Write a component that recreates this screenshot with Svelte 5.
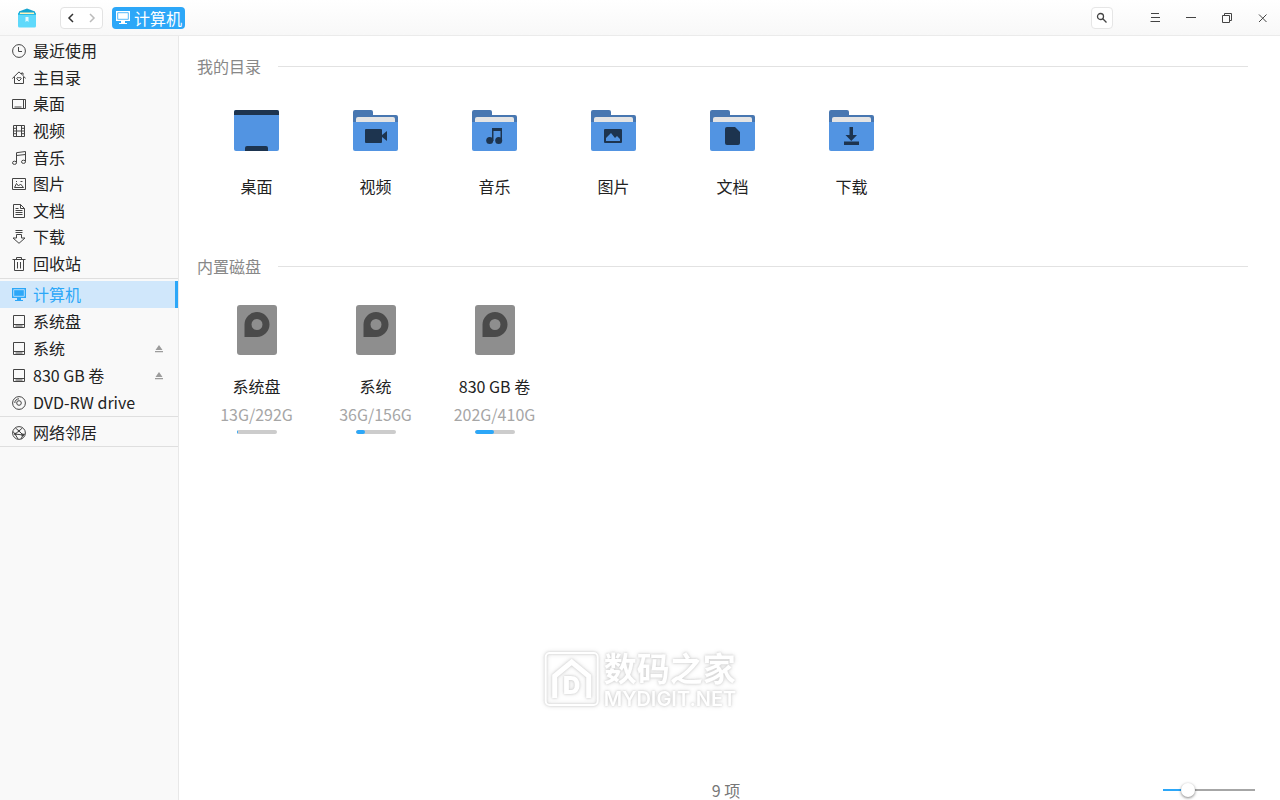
<script lang="ts">
  interface Place {
    icon: string
    label: string
    ejectable?: boolean
  }

  interface Disk {
    label: string
    used: number
    total: number
  }

  const bookmarks: Place[] = [
    { icon: 'recent', label: '最近使用' },
    { icon: 'home', label: '主目录' },
    { icon: 'desktop', label: '桌面' },
    { icon: 'video', label: '视频' },
    { icon: 'music', label: '音乐' },
    { icon: 'picture', label: '图片' },
    { icon: 'document', label: '文档' },
    { icon: 'download', label: '下载' },
    { icon: 'trash', label: '回收站' },
  ]

  const devices: Place[] = [
    { icon: 'computer', label: '计算机' },
    { icon: 'disk', label: '系统盘' },
    { icon: 'disk', label: '系统', ejectable: true },
    { icon: 'disk', label: '830 GB 卷', ejectable: true },
    { icon: 'dvd', label: 'DVD-RW drive' },
  ]

  const network: Place[] = [{ icon: 'network', label: '网络邻居' }]

  const folders = bookmarks.slice(2, 8)

  const disks: Disk[] = [
    { label: '系统盘', used: 13, total: 292 },
    { label: '系统', used: 36, total: 156 },
    { label: '830 GB 卷', used: 202, total: 410 },
  ]

  let current = $state('计算机')
  let zoom = $state(23)
  const itemCount = $derived(folders.length + disks.length)
</script>

{#snippet placeIcon(name: string)}
  <svg class="place-icon" viewBox="0 0 14 14" aria-hidden="true">
    {#if name === 'recent'}
      <circle cx="7" cy="7" r="6.4" />
      <path d="M6.5 3v4.5H10" />
    {:else if name === 'home'}
      <path d="M.3 7.5 7 .9l2.500 2.400V2H11v2.700l2.700 2.800M2.500 6v6.500h9V6" />
      <path d="M7 10 4.9 7.900C4.400 6.400 6.200 5.900 7 7.100c.8-1.200 2.600-.7 2.100.8z" />
    {:else if name === 'desktop'}
      <path d="M.5 2.5h13v9H.5zM11.5 2.5v9M2.5 10h7" />
    {:else if name === 'video'}
      <path d="M1.5 1.5h11v11h-11zM4.5 1.5v11M9.5 1.5v11M4.5 7h5M1.5 4.3h3M1.5 7h3M1.5 9.7h3M9.5 4.3h3M9.5 7h3M9.5 9.7h3" />
    {:else if name === 'music'}
      <path d="M4.5 11.5V1.7l9-1.200v10M4.500 4.500l9-1" />
      <ellipse cx="2.5" cy="11.8" rx="2" ry="1.6" />
      <ellipse cx="11.5" cy="10.8" rx="2" ry="1.6" />
    {:else if name === 'picture'}
      <path d="M.5 1.5h13v11H.5zM2.5 10.5l2-4 2 2.5 2-2 3 3.5zM4 4.5h1M8.5 4.5h2" />
    {:else if name === 'document'}
      <path d="M1.5.5h7l4 4v9h-11zM8.5.5v4h4M3.5 4.5h3M3.5 6.5h7M3.5 8.5h7M3.5 10.5h7" />
    {:else if name === 'download'}
      <path d="M3.5.5h7M3.5 2.5h7M4.5 4.5h5V8H13l-6 5.3L1 8h3.5z" />
    {:else if name === 'trash'}
      <path d="M.5 2.5h13M4.5 2.5v-2h5v2M2.5 2.5v11h9v-11M5.5 5v6.5M8.5 5v6.5" />
    {:else if name === 'computer'}
      <path class="solid" d="M0 0h14v10H9v2h2v1H3v-1h2v-2H0z" />
      <path class="screen" d="M1.7 1.7h10.6v6.6H1.7z" />
    {:else if name === 'disk'}
      <path d="M1.5.5h11v12h-11zM1.5 9.5h11M3.5 11h7" />
    {:else if name === 'dvd'}
      <circle cx="7" cy="7" r="6.4" />
      <circle cx="7" cy="7" r="2.3" />
      <path d="M2.8 7A4.2 4.2 0 0 1 7 2.8" />
    {:else if name === 'network'}
      <circle cx="7" cy="7" r="6.4" />
      <path d="M3.5 2 7 5l3.3-3M7 5 3 8l3 5M3 8 1 5.500M7 5l4 4 2-1M11 9l-2 4M3 8l8 1" />
      <circle class="solid" cx="7" cy="5" r="1.2" />
      <circle class="solid" cx="3.3" cy="8" r="1.2" />
      <circle class="solid" cx="10.7" cy="9" r="1.4" />
    {/if}
  </svg>
{/snippet}

{#snippet folderIcon(name: string)}
  <svg class="folder-icon" viewBox="0 0 45 41" aria-hidden="true">
    {#if name === 'desktop'}
      <rect width="45" height="41" rx="2" fill="#5294e2" />
      <path d="M0 5V2a2 2 0 0 1 2-2h41a2 2 0 0 1 2 2v3zM11 41v-3a2 2 0 0 1 2-2h19a2 2 0 0 1 2 2v3z" fill="#1d344f" />
    {:else}
      <path d="M0 16V2a2 2 0 0 1 2-2h16a2 2 0 0 1 2 2v3h23a2 2 0 0 1 2 2v9z" fill="#4877b1" />
      <path d="M3 16V9a2 2 0 0 1 2-2h35a2 2 0 0 1 2 2v7z" fill="#e4e4e4" />
      <path d="M0 12h45v27a2 2 0 0 1-2 2H2a2 2 0 0 1-2-2z" fill="#5294e2" />
      <g fill="#1d344f">
        {#if name === 'video'}
          <path d="M13 19h15a1 1 0 0 1 1 1v5l5-4v10l-5-4v5a1 1 0 0 1-1 1H13a1 1 0 0 1-1-1V20a1 1 0 0 1 1-1z" />
        {:else if name === 'music'}
          <path d="M20 18h10v3H20z" />
          <path d="M20 18h1.5v13H20zM28.5 18H30v13h-1.5z" />
          <circle cx="17.7" cy="30.5" r="3.5" />
          <circle cx="26.7" cy="30.5" r="3.5" />
        {:else if name === 'picture'}
          <path fill-rule="evenodd" d="M14 19h16a1 1 0 0 1 1 1v12a1 1 0 0 1-1 1H14a1 1 0 0 1-1-1V20a1 1 0 0 1 1-1zm1 12h14v-2l-3-3-2 2-4-5-5 5z" />
        {:else if name === 'document'}
          <path d="M17 17h8l5 5v11a2 2 0 0 1-2 2H17a2 2 0 0 1-2-2V19a2 2 0 0 1 2-2z" />
        {:else if name === 'download'}
          <path d="M20.5 17H24v8h4l-5.7 6-5.8-6h4zM15 31.5h15V35H15z" />
        {/if}
      </g>
    {/if}
  </svg>
{/snippet}

{#snippet placeList(places: Place[])}
  {#each places as place}
    <li class:active={place.label === current}>
      <a href="#top" onclick={() => (current = place.label)}>
        {@render placeIcon(place.icon)}
        <span class="place-label">{place.label}</span>
      </a>
      {#if place.ejectable}
        <button class="eject" aria-label="弹出 {place.label}">
          <svg viewBox="0 0 8 8" aria-hidden="true">
            <path d="M4 0 7.5 5h-7zM0 6h8v1.3H0z" fill="#9c9c9c" />
          </svg>
        </button>
      {/if}
    </li>
  {/each}
{/snippet}

<div class="window">
  <header class="titlebar">
    <svg class="app-icon" viewBox="0 0 18 20" aria-hidden="true">
      <path d="M1 3.5 9 .5l8 3v4H1z" fill="#14a5d0" />
      <path d="M0 4.5 2 6h14l2-1.5V18a1.5 1.5 0 0 1-1.5 1.5h-15A1.5 1.5 0 0 1 0 18z" fill="#5fd9fb" />
      <path d="M0 4.5 2 6h14l2-1.5V7H0z" fill="#2bbbe4" />
      <path d="M2 4.500h14V6H2z" fill="#fff3b8" />
      <path d="M7.500 9h3v5L9 12.800 7.500 14z" fill="#e2f9ff" />
    </svg>
    <div class="history">
      <button aria-label="后退">
        <svg viewBox="0 0 8 10" aria-hidden="true"><path d="M6 1 2 5l4 4" stroke="#333" /></svg>
      </button>
      <button aria-label="前进" disabled>
        <svg viewBox="0 0 8 10" aria-hidden="true"><path d="m2 1 4 4-4 4" stroke="#bbb" /></svg>
      </button>
    </div>
    <button class="crumb">
      {@render placeIcon('computer')}
      <span>计算机</span>
    </button>
    <button class="search" aria-label="搜索">
      <svg viewBox="0 0 12 12" aria-hidden="true">
        <circle cx="4.5" cy="4.5" r="3" />
        <path d="m6.8 6.8 3.7 3.7" />
      </svg>
    </button>
    <div class="controls">
      <button aria-label="菜单">
        <svg viewBox="0 0 12 12" aria-hidden="true"><path d="M2 1.5h8M2 5.5h9M1.5 9.5H11" /></svg>
      </button>
      <button aria-label="最小化">
        <svg viewBox="0 0 12 12" aria-hidden="true"><path d="M1 5.5h10" /></svg>
      </button>
      <button aria-label="还原">
        <svg viewBox="0 0 12 12" aria-hidden="true"><path d="M1.5 3.5h7v7h-7zM3.5 3.5v-2h7v7h-2" /></svg>
      </button>
      <button aria-label="关闭">
        <svg viewBox="0 0 12 12" aria-hidden="true"><path d="m2 2.5 7.500 7.500M9.500 2.500 2 10" /></svg>
      </button>
    </div>
  </header>

  <div class="body">
    <nav class="sidebar" aria-label="位置">
      <ul class="bookmarks">{@render placeList(bookmarks)}</ul>
      <ul>{@render placeList(devices)}</ul>
      <ul>{@render placeList(network)}</ul>
    </nav>

    <main class="content">
      <section>
        <h2>我的目录</h2>
        <div class="grid">
          {#each folders as folder}
            <button class="item">
              <span class="item-icon">{@render folderIcon(folder.icon)}</span>
              <span class="item-label">{folder.label}</span>
            </button>
          {/each}
        </div>
      </section>

      <section>
        <h2>内置磁盘</h2>
        <div class="grid">
          {#each disks as disk}
            <button class="item">
              <span class="item-icon">
                <svg class="disk-icon" viewBox="0 0 40 50" aria-hidden="true">
                  <rect width="40" height="50" rx="3" fill="#8e8e8e" />
                  <path fill-rule="evenodd" d="M7.5 32V19.5A12.5 12.5 0 1 1 20 32zM20 14a5.5 5.5 0 1 0 0 11 5.5 5.5 0 0 0 0-11z" fill="#4a4a4a" />
                </svg>
              </span>
              <span class="item-label">{disk.label}</span>
              <span class="capacity">{disk.used}G/{disk.total}G</span>
              <span class="usage">
                <span class="usage-fill" style={`width: ${(disk.used / disk.total) * 100}%`}></span>
              </span>
            </button>
          {/each}
        </div>
      </section>

      <footer class="statusbar">
        <span class="count">{itemCount} 项</span>
        <input
          type="range"
          min="0"
          max="100"
          bind:value={zoom}
          aria-label="图标大小"
          style={`--filled: ${zoom}%`}
        />
      </footer>
    </main>
  </div>

  <div class="watermark" aria-hidden="true">
    <svg viewBox="0 0 56 56">
      <rect x="2" y="2" width="52" height="52" rx="4" stroke-width="2" />
      <path d="M11 47V25l17-14 17 14v22" stroke-width="5" />
    </svg>
    <span class="watermark-letter">D</span>
    <div class="watermark-text">
      <span class="watermark-name">数码之家</span>
      <span class="watermark-site">MYDIGIT.NET</span>
    </div>
  </div>
</div>

<style>
  :global(body) {
    margin: 0;
  }

  .window {
    position: relative;
    display: flex;
    flex-direction: column;
    min-height: 100vh;
    background: #fff;
    color: #222;
    font-family: 'Noto Sans CJK SC', sans-serif;
    font-size: 16px;
    line-height: 24px;
  }

  button {
    margin: 0;
    padding: 0;
    border: 0;
    background: none;
    color: inherit;
    font: inherit;
  }

  svg {
    display: block;
    fill: none;
  }

  .titlebar {
    display: flex;
    align-items: center;
    box-sizing: border-box;
    height: 36px;
    padding: 0 11px 0 18px;
    border-bottom: 1px solid #ebebeb;
    background: linear-gradient(#fff, #f8f8f8);
  }

  .app-icon {
    width: 18px;
    height: 20px;
  }

  .history {
    display: flex;
    box-sizing: border-box;
    width: 43px;
    height: 22px;
    margin-left: 24px;
    border: 1px solid #e3e3e3;
    border-radius: 4px;
    background: #fff;
  }

  .history button {
    flex: 1;
    display: grid;
    place-items: center;
  }

  .history svg {
    width: 8px;
    height: 10px;
    stroke-width: 1.5;
  }

  .crumb {
    display: flex;
    align-items: center;
    gap: 4px;
    height: 22px;
    margin-left: 9px;
    padding: 0 3px 0 4px;
    border-radius: 4px;
    background: #2ca7f8;
    color: #fff;
    line-height: 22px;
  }

  .search {
    display: grid;
    place-items: center;
    box-sizing: border-box;
    width: 22px;
    height: 22px;
    margin-left: auto;
    border: 1px solid #e6e6e6;
    border-radius: 4px;
    background: #fff;
  }

  .search svg {
    width: 12px;
    height: 12px;
    stroke: #444;
    stroke-width: 1.3;
  }

  .controls {
    display: flex;
    gap: 24px;
    margin-left: 36px;
  }

  .controls svg {
    width: 12px;
    height: 12px;
    stroke: #444;
  }

  .body {
    flex: 1;
    display: flex;
  }

  .sidebar {
    flex: none;
    box-sizing: border-box;
    width: 179px;
    border-right: 1px solid #e8e8e8;
    background: #f9f9f9;
  }

  .sidebar ul {
    display: flex;
    flex-direction: column;
    justify-content: space-between;
    margin: 0;
    padding: 2px 0 0;
    border-bottom: 1px solid #dfdfdf;
    list-style: none;
  }

  .sidebar .bookmarks {
    min-height: 239px;
    padding-bottom: 1px;
  }

  .sidebar li {
    display: flex;
    align-items: center;
    height: 27px;
    padding-right: 12px;
    border-right: 3px solid transparent;
  }

  .sidebar .bookmarks li {
    height: 26px;
  }

  .sidebar a {
    flex: 1;
    display: flex;
    align-items: center;
    gap: 7px;
    padding-left: 12px;
    color: inherit;
    text-decoration: none;
    white-space: nowrap;
  }

  .place-label {
    padding-bottom: 2px;
  }

  .sidebar .active {
    border-right-color: #2ca7f8;
    background: #d0e7fb;
    color: #2ca7f8;
  }

  .place-icon {
    width: 14px;
    height: 14px;
    stroke: #444;
  }

  .place-icon .solid {
    fill: #444;
    stroke: none;
  }

  .place-icon .screen {
    stroke: #f9f9f9;
    stroke-width: 0.8;
  }

  .active .place-icon .solid {
    fill: #2ca7f8;
  }

  .active .place-icon .screen {
    stroke: #d0e7fb;
  }

  .crumb .place-icon .solid {
    fill: #fff;
  }

  .crumb .place-icon .screen {
    stroke: #2ca7f8;
  }

  .eject svg {
    width: 8px;
    height: 8px;
  }

  .content {
    flex: 1;
    display: flex;
    flex-direction: column;
    min-width: 0;
    padding: 18px 0 0 18px;
  }

  section {
    margin-bottom: 56px;
  }

  h2 {
    display: flex;
    align-items: center;
    gap: 17px;
    margin: 0 32px 20px 0;
    color: #888;
    font-size: 16px;
    font-weight: 400;
  }

  h2::after {
    content: '';
    flex: 1;
    height: 1px;
    background: #e2e2e2;
  }

  .grid {
    display: flex;
    flex-wrap: wrap;
  }

  .item {
    display: flex;
    flex-direction: column;
    align-items: center;
    width: 119px;
  }

  .item-icon {
    display: grid;
    place-items: center;
    height: 64px;
    margin-bottom: 12px;
  }

  .folder-icon {
    width: 45px;
    height: 41px;
  }

  .disk-icon {
    width: 40px;
    height: 50px;
  }

  .capacity {
    margin-top: 4px;
    color: #a6a6a6;
  }

  .usage {
    width: 40px;
    height: 4px;
    margin-top: 4px;
    border-radius: 2px;
    overflow: hidden;
    background: #ccc;
  }

  .usage-fill {
    display: block;
    height: 100%;
    border-radius: 2px;
    background: #2ca7f8;
  }

  .statusbar {
    display: grid;
    grid-template-columns: 1fr auto 1fr;
    align-items: center;
    height: 22px;
    margin-top: auto;
    padding-right: 25px;
  }

  .count {
    grid-column: 2;
    color: #777;
  }

  input[type='range'] {
    appearance: none;
    justify-self: end;
    width: 92px;
    height: 16px;
    margin: 0;
    background: linear-gradient(90deg, #2ca7f8 var(--filled), #a6a6a6 var(--filled)) center / 100% 2px no-repeat;
  }

  input[type='range']::-webkit-slider-thumb {
    appearance: none;
    width: 14px;
    height: 14px;
    border-radius: 50%;
    background: #fff;
    box-shadow: 0 1px 3px rgba(0, 0, 0, 0.5);
  }

  .watermark {
    position: absolute;
    left: 50%;
    bottom: 91px;
    display: flex;
    align-items: center;
    gap: 4px;
    color: #fff;
    font-weight: 700;
    transform: translateX(-50%);
    filter: drop-shadow(0 0 1px #ccc) drop-shadow(0 0 2px #e2e2e2);
    pointer-events: none;
  }

  .watermark svg {
    width: 56px;
    height: 56px;
    stroke: #fff;
  }

  .watermark-letter {
    position: absolute;
    left: 0;
    top: 25px;
    width: 56px;
    font-family: Inter, sans-serif;
    font-size: 24px;
    font-weight: 900;
    text-align: center;
  }

  .watermark-text {
    display: flex;
    flex-direction: column;
    gap: 4px;
  }

  .watermark-name {
    font-size: 33px;
    line-height: 36px;
  }

  .watermark-site {
    font-family: Inter, sans-serif;
    font-size: 20px;
    font-weight: 600;
    line-height: 20px;
  }
</style>
